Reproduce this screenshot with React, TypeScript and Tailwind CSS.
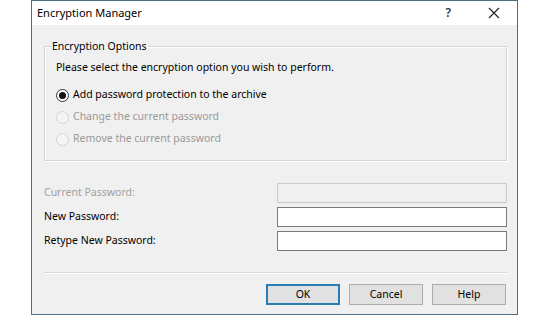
export default function App() {
  return (
    <div
      className="w-[560px] h-[315px] bg-white overflow-hidden text-[10.5px] text-[#000]"
      style={{ fontFamily: '"Noto Sans", "Liberation Sans", sans-serif' }}
    >
      <div className="ml-[31px] w-[487px] h-[315px] border border-[#4d6f86] flex flex-col">
        {/* title bar */}
        <div className="h-[24px] bg-white flex items-center pl-[5px] pr-[17px] shrink-0">
          <span className="flex-1 text-[11px]">Encryption Manager</span>
          <span className="text-[12px] font-semibold text-[#333] mr-[37px]">?</span>
          <svg width="12" height="12" viewBox="0 0 12 12" className="mb-[1px]">
            <path d="M1 1 L11 11 M11 1 L1 11" stroke="#222" strokeWidth="1.1" />
          </svg>
        </div>

        {/* body */}
        <div className="flex-1 bg-[#f0f0f0] pl-[12px] pr-[10px] pt-[13px] flex flex-col">
          <fieldset className="border border-[#d5d5d5] shadow-[inset_1px_1px_0_#fff,1px_1px_0_#fff] h-[123px] pl-[11px] pt-[5px]">
            <legend className="-ml-[5px] px-[1px] leading-[16px]">Encryption Options</legend>
            <div className="leading-[16px]">Please select the encryption option you wish to perform.</div>
            <div className="mt-[12px] flex flex-col gap-[6px]">
              <Radio label="Add password protection to the archive" checked />
              <Radio label="Change the current password" disabled />
              <Radio label="Remove the current password" disabled />
            </div>
          </fieldset>

          <div className="mt-[22px] flex flex-col gap-[4px]">
            <Field label="Current Password:" disabled />
            <Field label="New Password:" />
            <Field label="Retype New Password:" />
          </div>

          <div className="mt-[21px] h-[2px] border-t border-[#d9d9d9] border-b border-b-white" />

          <div className="mt-[10px] flex justify-end gap-[9px] pr-[1px]">
            <Btn label="OK" primary />
            <Btn label="Cancel" />
            <Btn label="Help" />
          </div>
        </div>
      </div>
    </div>
  )
}

function Radio({ label, checked, disabled }: { label: string; checked?: boolean; disabled?: boolean }) {
  return (
    <div className="flex items-center h-[16px]">
      <span
        className={
          "w-[13px] h-[13px] rounded-full border flex items-center justify-center " +
          (disabled ? "border-[#d4d4d4] bg-[#f4f4f4]" : "border-[#333] bg-white")
        }
      >
        {checked && <span className="w-[7px] h-[7px] rounded-full bg-[#111]" />}
      </span>
      <span className={"ml-[4px] " + (disabled ? "text-[#9a9a9a]" : "")}>{label}</span>
    </div>
  )
}

function Field({ label, disabled }: { label: string; disabled?: boolean }) {
  return (
    <div className="flex items-center h-[20px]">
      <span className={"w-[233px] " + (disabled ? "text-[#a0a0a0]" : "")}>{label}</span>
      <div
        className={
          "w-[230px] h-[20px] border " +
          (disabled ? "border-[#cccccc] bg-[#f0f0f0]" : "border-[#7a7a7a] bg-white")
        }
      />
    </div>
  )
}

function Btn({ label, primary }: { label: string; primary?: boolean }) {
  return (
    <div
      className={
        "w-[74px] h-[21px] flex items-center justify-center bg-[#e1e1e1] border " +
        (primary ? "border-[#2b7bb5] border-2" : "border-[#adadad]")
      }
    >
      {label}
    </div>
  )
}
